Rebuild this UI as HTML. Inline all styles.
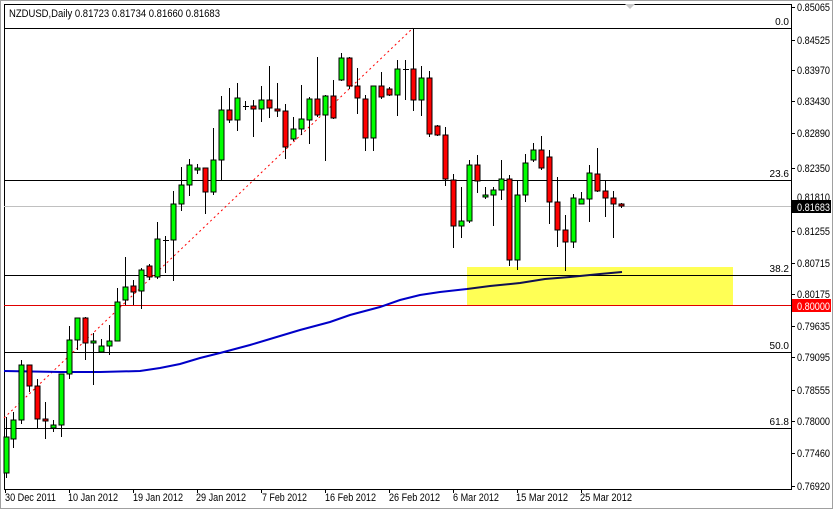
<!DOCTYPE html>
<html><head><meta charset="utf-8"><style>
html,body{margin:0;padding:0;background:#fff;width:833px;height:509px;overflow:hidden}
svg{display:block;font-family:"Liberation Sans",Tahoma,sans-serif;font-size:10px}
</style></head><body>
<svg width="833" height="509" viewBox="0 0 833 509" xmlns="http://www.w3.org/2000/svg">
<rect x="0" y="0" width="833" height="509" fill="#fff"/>
<rect x="0.5" y="0.5" width="832" height="508" fill="none" stroke="#a0a0a0"/>
<rect x="4.5" y="4.5" width="787" height="485" fill="none" stroke="#000"/>
<polygon points="625,4 635,4 630,9" fill="#c8c8c8"/>
<text x="9" y="17" fill="#000" font-size="11" textLength="211" lengthAdjust="spacingAndGlyphs">NZDUSD,Daily  0.81723 0.81734 0.81660 0.81683</text>
<rect x="467" y="267" width="266" height="38" fill="#ffff55"/>
<g stroke="#000" stroke-width="1" shape-rendering="crispEdges">
<line x1="4" y1="28.5" x2="791" y2="28.5"/>
<line x1="4" y1="180.5" x2="791" y2="180.5"/>
<line x1="4" y1="275.5" x2="791" y2="275.5"/>
<line x1="4" y1="352.5" x2="791" y2="352.5"/>
<line x1="4" y1="428.5" x2="791" y2="428.5"/>
</g>
<line x1="4" y1="206.5" x2="791" y2="206.5" stroke="#c0c0c0" shape-rendering="crispEdges"/>
<line x1="4" y1="305.5" x2="791" y2="305.5" stroke="#e00000" shape-rendering="crispEdges"/>
<g font-size="10" fill="#000" text-anchor="end">
<text x="789" y="25">0.0</text><text x="789" y="177">23.6</text><text x="789" y="272">38.2</text><text x="789" y="349">50.0</text><text x="789" y="425">61.8</text>
</g>
<line x1="4" y1="418" x2="413" y2="28" stroke="#ff0000" stroke-dasharray="2,3"/>
<polyline fill="none" stroke="#0000c8" stroke-width="2" points="4,371 60,372 100,372 140,371 160,368 180,364 200,358 220,353 250,345 280,336 300,330 330,322 350,315 380,307 400,300 420,295 440,292 467,289"/>
<polyline fill="none" stroke="#101050" stroke-width="2" points="467,289 490,286 520,283 545,279 570,277 600,274 622,272"/>
<g stroke="#000" stroke-width="1" shape-rendering="crispEdges">
<line x1="6.5" y1="417" x2="6.5" y2="478"/><rect x="4" y="437" width="5" height="36" fill="#00ff00"/>
<line x1="13.5" y1="412" x2="13.5" y2="448"/><rect x="11" y="420" width="5" height="19" fill="#00ff00"/>
<line x1="21.5" y1="360" x2="21.5" y2="424"/><rect x="19" y="365" width="5" height="55" fill="#00ff00"/>
<line x1="29.5" y1="365" x2="29.5" y2="392"/><rect x="27" y="365" width="5" height="21" fill="#ff0000"/>
<line x1="37.5" y1="379" x2="37.5" y2="428"/><rect x="35" y="386" width="5" height="33" fill="#ff0000"/>
<line x1="45.5" y1="402" x2="45.5" y2="439"/><rect x="43" y="419" width="5" height="2" fill="#ff0000"/>
<line x1="53.5" y1="420" x2="53.5" y2="432"/><rect x="51" y="425" width="5" height="3" fill="#00ff00"/>
<line x1="61.5" y1="374" x2="61.5" y2="437"/><rect x="59" y="374" width="5" height="51" fill="#00ff00"/>
<line x1="69.5" y1="326" x2="69.5" y2="379"/><rect x="67" y="340" width="5" height="34" fill="#00ff00"/>
<line x1="77.5" y1="318" x2="77.5" y2="350"/><rect x="75" y="318" width="5" height="22" fill="#00ff00"/>
<line x1="85.5" y1="317" x2="85.5" y2="360"/><rect x="83" y="318" width="5" height="25" fill="#ff0000"/>
<line x1="93.5" y1="333" x2="93.5" y2="385"/><rect x="91" y="341" width="5" height="2" fill="#00ff00"/>
<line x1="101.5" y1="339" x2="101.5" y2="353"/><rect x="99" y="346" width="5" height="6" fill="#00ff00"/>
<line x1="109.5" y1="325" x2="109.5" y2="355"/><rect x="107" y="341" width="5" height="5" fill="#00ff00"/>
<line x1="117.5" y1="288" x2="117.5" y2="341"/><rect x="115" y="302" width="5" height="39" fill="#00ff00"/>
<line x1="125.5" y1="257" x2="125.5" y2="305"/><rect x="123" y="287" width="5" height="13" fill="#00ff00"/>
<line x1="133.5" y1="280" x2="133.5" y2="305"/><rect x="131" y="286" width="5" height="6" fill="#ff0000"/>
<line x1="141.5" y1="268" x2="141.5" y2="309"/><rect x="139" y="270" width="5" height="21" fill="#00ff00"/>
<line x1="149.5" y1="264" x2="149.5" y2="280"/><rect x="147" y="266" width="5" height="11" fill="#ff0000"/>
<line x1="157.5" y1="222" x2="157.5" y2="279"/><rect x="155" y="239" width="5" height="38" fill="#00ff00"/>
<line x1="165.5" y1="236" x2="165.5" y2="273"/><line x1="163" y1="240.5" x2="169" y2="240.5"/>
<line x1="173.5" y1="191" x2="173.5" y2="281"/><rect x="171" y="204" width="5" height="36" fill="#00ff00"/>
<line x1="181.5" y1="167" x2="181.5" y2="211"/><rect x="179" y="185" width="5" height="19" fill="#00ff00"/>
<line x1="189.5" y1="159" x2="189.5" y2="196"/><rect x="187" y="165" width="5" height="20" fill="#00ff00"/>
<line x1="197.5" y1="164" x2="197.5" y2="174"/><rect x="195" y="168" width="5" height="2" fill="#00ff00"/>
<line x1="205.5" y1="168" x2="205.5" y2="214"/><rect x="203" y="168" width="5" height="24" fill="#ff0000"/>
<line x1="213.5" y1="128" x2="213.5" y2="195"/><rect x="211" y="160" width="5" height="32" fill="#00ff00"/>
<line x1="221.5" y1="96" x2="221.5" y2="180"/><rect x="219" y="110" width="5" height="50" fill="#00ff00"/>
<line x1="229.5" y1="88" x2="229.5" y2="123"/><rect x="227" y="110" width="5" height="10" fill="#ff0000"/>
<line x1="237.5" y1="83" x2="237.5" y2="131"/><rect x="235" y="98" width="5" height="22" fill="#00ff00"/>
<line x1="245.5" y1="101" x2="245.5" y2="110"/><line x1="243" y1="106.5" x2="249" y2="106.5"/>
<line x1="253.5" y1="100" x2="253.5" y2="137"/><rect x="251" y="106" width="5" height="3" fill="#ff0000"/>
<line x1="261.5" y1="86" x2="261.5" y2="122"/><rect x="259" y="100" width="5" height="9" fill="#00ff00"/>
<line x1="269.5" y1="66" x2="269.5" y2="118"/><rect x="267" y="100" width="5" height="8" fill="#ff0000"/>
<line x1="277.5" y1="83" x2="277.5" y2="117"/><rect x="275" y="109" width="5" height="2" fill="#ff0000"/>
<line x1="285.5" y1="104" x2="285.5" y2="159"/><rect x="283" y="111" width="5" height="36" fill="#ff0000"/>
<line x1="293.5" y1="117" x2="293.5" y2="141"/><rect x="291" y="129" width="5" height="10" fill="#00ff00"/>
<line x1="301.5" y1="85" x2="301.5" y2="135"/><rect x="299" y="119" width="5" height="10" fill="#00ff00"/>
<line x1="309.5" y1="97" x2="309.5" y2="144"/><rect x="307" y="99" width="5" height="21" fill="#00ff00"/>
<line x1="317.5" y1="57" x2="317.5" y2="117"/><rect x="315" y="99" width="5" height="16" fill="#ff0000"/>
<line x1="325.5" y1="95" x2="325.5" y2="161"/><rect x="323" y="96" width="5" height="19" fill="#00ff00"/>
<line x1="333.5" y1="80" x2="333.5" y2="119"/><rect x="331" y="96" width="5" height="22" fill="#ff0000"/>
<line x1="341.5" y1="53" x2="341.5" y2="81"/><rect x="339" y="58" width="5" height="22" fill="#00ff00"/>
<line x1="349.5" y1="57" x2="349.5" y2="89"/><rect x="347" y="58" width="5" height="28" fill="#ff0000"/>
<line x1="357.5" y1="68" x2="357.5" y2="114"/><rect x="355" y="86" width="5" height="12" fill="#ff0000"/>
<line x1="365.5" y1="95" x2="365.5" y2="151"/><rect x="363" y="99" width="5" height="39" fill="#ff0000"/>
<line x1="373.5" y1="86" x2="373.5" y2="151"/><rect x="371" y="86" width="5" height="52" fill="#00ff00"/>
<line x1="381.5" y1="72" x2="381.5" y2="99"/><rect x="379" y="86" width="5" height="11" fill="#ff0000"/>
<line x1="389.5" y1="87" x2="389.5" y2="96"/><rect x="387" y="89" width="5" height="6" fill="#ff0000"/>
<line x1="397.5" y1="60" x2="397.5" y2="116"/><rect x="395" y="69" width="5" height="26" fill="#00ff00"/>
<line x1="405.5" y1="60" x2="405.5" y2="100"/><line x1="403" y1="69.5" x2="409" y2="69.5"/>
<line x1="413.5" y1="28" x2="413.5" y2="111"/><rect x="411" y="69" width="5" height="31" fill="#ff0000"/>
<line x1="421.5" y1="66" x2="421.5" y2="116"/><rect x="419" y="78" width="5" height="22" fill="#00ff00"/>
<line x1="429.5" y1="71" x2="429.5" y2="137"/><rect x="427" y="78" width="5" height="56" fill="#ff0000"/>
<line x1="437.5" y1="125" x2="437.5" y2="136"/><rect x="435" y="126" width="5" height="9" fill="#ff0000"/>
<line x1="445.5" y1="127" x2="445.5" y2="186"/><rect x="443" y="135" width="5" height="44" fill="#ff0000"/>
<line x1="453.5" y1="174" x2="453.5" y2="248"/><rect x="451" y="180" width="5" height="46" fill="#ff0000"/>
<line x1="461.5" y1="187" x2="461.5" y2="238"/><rect x="459" y="221" width="5" height="5" fill="#00ff00"/>
<line x1="469.5" y1="160" x2="469.5" y2="223"/><rect x="467" y="165" width="5" height="56" fill="#00ff00"/>
<line x1="477.5" y1="155" x2="477.5" y2="193"/><rect x="475" y="165" width="5" height="16" fill="#ff0000"/>
<line x1="485.5" y1="187" x2="485.5" y2="199"/><rect x="483" y="195" width="5" height="2" fill="#00ff00"/>
<line x1="493.5" y1="187" x2="493.5" y2="226"/><rect x="491" y="190" width="5" height="5" fill="#00ff00"/>
<line x1="501.5" y1="160" x2="501.5" y2="200"/><rect x="499" y="179" width="5" height="11" fill="#00ff00"/>
<line x1="509.5" y1="175" x2="509.5" y2="266"/><rect x="507" y="179" width="5" height="81" fill="#ff0000"/>
<line x1="517.5" y1="180" x2="517.5" y2="270"/><rect x="515" y="195" width="5" height="65" fill="#00ff00"/>
<line x1="525.5" y1="154" x2="525.5" y2="202"/><rect x="523" y="163" width="5" height="32" fill="#00ff00"/>
<line x1="533.5" y1="143" x2="533.5" y2="162"/><rect x="531" y="150" width="5" height="10" fill="#00ff00"/>
<line x1="541.5" y1="136" x2="541.5" y2="170"/><rect x="539" y="150" width="5" height="18" fill="#ff0000"/>
<line x1="549.5" y1="150" x2="549.5" y2="224"/><rect x="547" y="157" width="5" height="45" fill="#ff0000"/>
<line x1="557.5" y1="177" x2="557.5" y2="247"/><rect x="555" y="202" width="5" height="28" fill="#ff0000"/>
<line x1="565.5" y1="215" x2="565.5" y2="271"/><rect x="563" y="230" width="5" height="12" fill="#ff0000"/>
<line x1="573.5" y1="194" x2="573.5" y2="248"/><rect x="571" y="198" width="5" height="44" fill="#00ff00"/>
<line x1="581.5" y1="192" x2="581.5" y2="204"/><rect x="579" y="199" width="5" height="5" fill="#00ff00"/>
<line x1="589.5" y1="165" x2="589.5" y2="222"/><rect x="587" y="173" width="5" height="26" fill="#00ff00"/>
<line x1="597.5" y1="148" x2="597.5" y2="192"/><rect x="595" y="174" width="5" height="17" fill="#ff0000"/>
<line x1="605.5" y1="180" x2="605.5" y2="217"/><rect x="603" y="191" width="5" height="7" fill="#ff0000"/>
<line x1="613.5" y1="191" x2="613.5" y2="238"/><rect x="611" y="198" width="5" height="6" fill="#ff0000"/>
<line x1="621.5" y1="203" x2="621.5" y2="208"/><rect x="619" y="204" width="5" height="2" fill="#ff0000"/>
</g>
<g stroke="#000" shape-rendering="crispEdges">
<line x1="791.5" y1="4" x2="791.5" y2="489"/>
<line x1="791" y1="7.5" x2="795" y2="7.5"/><line x1="791" y1="40.5" x2="795" y2="40.5"/><line x1="791" y1="70.5" x2="795" y2="70.5"/><line x1="791" y1="101.5" x2="795" y2="101.5"/><line x1="791" y1="133.5" x2="795" y2="133.5"/><line x1="791" y1="168.5" x2="795" y2="168.5"/><line x1="791" y1="231.5" x2="795" y2="231.5"/><line x1="791" y1="263.5" x2="795" y2="263.5"/><line x1="791" y1="294.5" x2="795" y2="294.5"/><line x1="791" y1="326.5" x2="795" y2="326.5"/><line x1="791" y1="357.5" x2="795" y2="357.5"/><line x1="791" y1="390.5" x2="795" y2="390.5"/><line x1="791" y1="421.5" x2="795" y2="421.5"/><line x1="791" y1="453.5" x2="795" y2="453.5"/><line x1="791" y1="486.5" x2="795" y2="486.5"/>
</g>
<g fill="#000" font-size="11">
<text x="797" y="11" textLength="33" lengthAdjust="spacingAndGlyphs">0.85065</text><text x="797" y="44" textLength="33" lengthAdjust="spacingAndGlyphs">0.84525</text><text x="797" y="74" textLength="33" lengthAdjust="spacingAndGlyphs">0.83970</text><text x="797" y="105" textLength="33" lengthAdjust="spacingAndGlyphs">0.83430</text><text x="797" y="137" textLength="33" lengthAdjust="spacingAndGlyphs">0.82890</text><text x="797" y="172" textLength="33" lengthAdjust="spacingAndGlyphs">0.82350</text><text x="797" y="201" textLength="33" lengthAdjust="spacingAndGlyphs">0.81810</text><text x="797" y="235" textLength="33" lengthAdjust="spacingAndGlyphs">0.81255</text><text x="797" y="267" textLength="33" lengthAdjust="spacingAndGlyphs">0.80715</text><text x="797" y="298" textLength="33" lengthAdjust="spacingAndGlyphs">0.80175</text><text x="797" y="330" textLength="33" lengthAdjust="spacingAndGlyphs">0.79635</text><text x="797" y="361" textLength="33" lengthAdjust="spacingAndGlyphs">0.79095</text><text x="797" y="394" textLength="33" lengthAdjust="spacingAndGlyphs">0.78555</text><text x="797" y="425" textLength="33" lengthAdjust="spacingAndGlyphs">0.78000</text><text x="797" y="457" textLength="33" lengthAdjust="spacingAndGlyphs">0.77460</text><text x="797" y="490" textLength="33" lengthAdjust="spacingAndGlyphs">0.76920</text>
</g>
<rect x="792" y="200" width="39" height="13" fill="#000"/>
<text x="797" y="211" fill="#fff" font-size="11" textLength="33" lengthAdjust="spacingAndGlyphs">0.81683</text>
<rect x="792" y="299" width="39" height="13" fill="#ff0000"/>
<text x="797" y="310" fill="#fff" font-size="11" textLength="33" lengthAdjust="spacingAndGlyphs">0.80000</text>
<g stroke="#000" shape-rendering="crispEdges">
<line x1="5.5" y1="489" x2="5.5" y2="493"/><line x1="69.5" y1="489" x2="69.5" y2="493"/><line x1="133.5" y1="489" x2="133.5" y2="493"/><line x1="197.5" y1="489" x2="197.5" y2="493"/><line x1="261.5" y1="489" x2="261.5" y2="493"/><line x1="325.5" y1="489" x2="325.5" y2="493"/><line x1="389.5" y1="489" x2="389.5" y2="493"/><line x1="453.5" y1="489" x2="453.5" y2="493"/><line x1="517.5" y1="489" x2="517.5" y2="493"/><line x1="581.5" y1="489" x2="581.5" y2="493"/>
</g>
<g fill="#000" font-size="11">
<text x="5" y="501" textLength="51" lengthAdjust="spacingAndGlyphs">30 Dec 2011</text><text x="68" y="501" textLength="50" lengthAdjust="spacingAndGlyphs">10 Jan 2012</text><text x="133" y="501" textLength="50" lengthAdjust="spacingAndGlyphs">19 Jan 2012</text><text x="196" y="501" textLength="50" lengthAdjust="spacingAndGlyphs">29 Jan 2012</text><text x="262" y="501" textLength="45" lengthAdjust="spacingAndGlyphs">7 Feb 2012</text><text x="325" y="501" textLength="51" lengthAdjust="spacingAndGlyphs">16 Feb 2012</text><text x="389" y="501" textLength="51" lengthAdjust="spacingAndGlyphs">26 Feb 2012</text><text x="453" y="501" textLength="46" lengthAdjust="spacingAndGlyphs">6 Mar 2012</text><text x="516" y="501" textLength="52" lengthAdjust="spacingAndGlyphs">15 Mar 2012</text><text x="580" y="501" textLength="52" lengthAdjust="spacingAndGlyphs">25 Mar 2012</text>
</g>
</svg>
</body></html>
